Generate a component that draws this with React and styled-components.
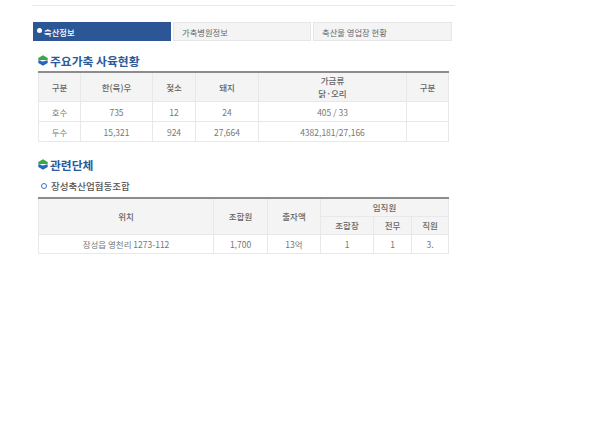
import React from "react";
import styled, { createGlobalStyle } from "styled-components";

const GlobalStyle = createGlobalStyle`
  html, body {
    margin: 0;
    padding: 0;
    background: #fff;
  }
  body {
    font-family: "Noto Sans CJK KR", "Noto Sans", sans-serif;
  }
`;

const Page = styled.div`
  width: 423px;
  margin-left: 32px;
  padding-top: 5px;
`;

const TopLine = styled.div`
  height: 1px;
  background: #e8e8e8;
`;

const Tabs = styled.ul`
  display: flex;
  gap: 2px;
  list-style: none;
  margin: 16px 0 0 1px;
  padding: 0;
`;

const Tab = styled.li`
  box-sizing: border-box;
  width: ${(props) => props.width}px;
  height: 19px;
  display: flex;
  align-items: center;
  padding-left: ${(props) => (props.active ? "3px" : "8px")};
  font-size: 8.3px;
  color: ${(props) => (props.active ? "#fff" : "#666")};
  background: ${(props) => (props.active ? "#2b5797" : "#f4f4f4")};
  border: 1px solid ${(props) => (props.active ? "#2b5797" : "#e6e6e6")};
  ${(props) => props.active && "font-weight: 500;"}
`;

const Dot = styled.span`
  width: 5px;
  height: 5px;
  border-radius: 50%;
  background: #fff;
  margin-right: 2px;
  margin-top: -3px;
`;

const Heading = styled.h2`
  display: flex;
  align-items: center;
  gap: 2px;
  margin: ${(props) => props.top}px 0 0 6px;
  height: 18px;
  font-size: 11.8px;
  font-weight: 700;
  color: #2a5a9a;
`;

const SubHeading = styled.h3`
  display: flex;
  align-items: center;
  gap: 4px;
  margin: 5px 0 0 9px;
  height: 16px;
  font-size: 9.5px;
  font-weight: 500;
  color: #555;
`;

const Ring = styled.span`
  box-sizing: border-box;
  width: 6px;
  height: 6px;
  border-radius: 50%;
  border: 1.5px solid #3f6fc0;
`;

const Table = styled.table`
  table-layout: fixed;
  border-collapse: collapse;
  width: 410px;
  margin: ${(props) => props.top}px 0 0 6px;
  border-top: 2px solid #8c8c8c;
  font-size: 8.5px;
`;

const Th = styled.th`
  height: ${(props) => props.h || 28}px;
  padding: 0;
  background: #f4f4f4;
  border: 1px solid #e8e8e8;
  border-top: 0;
  font-weight: 500;
  line-height: 13px;
  color: #666;
  text-align: center;
`;

const Td = styled.td`
  height: ${(props) => props.h || 18}px;
  padding: 0;
  border: 1px solid #e8e8e8;
  color: #777;
  text-align: center;
`;

function Emblem() {
  return (
    <svg width="10" height="11" viewBox="0 0 10 11">
      <path d="M5 0.3 9.7 3 9.7 5 0.3 5 0.3 3Z" fill="#3aa648" />
      <path d="M0.3 5.6C2.5 4.6 3.5 7 5 6.6C6.5 6.2 8 5.2 9.7 5.6L9.7 8 5 10.7 0.3 8Z" fill="#2467b8" />
    </svg>
  );
}

const mainCols = [42, 72, 43, 63, 148, 42];
const staffCols = [175, 54, 53, 53, 38, 37];

function App() {
  return (
    <Page>
      <GlobalStyle />
      <TopLine />
      <Tabs>
        <Tab active width={138}>
          <Dot />
          축산정보
        </Tab>
        <Tab width={138}>가축병원정보</Tab>
        <Tab width={139}>축산물 영업장 현황</Tab>
      </Tabs>

      <Heading top={10}>
        <Emblem />
        주요가축 사육현황
      </Heading>
      <Table top={2}>
        <colgroup>
          {mainCols.map((w, i) => (
            <col key={i} width={w} />
          ))}
        </colgroup>
        <thead>
          <tr>
            <Th>구분</Th>
            <Th>한(육)우</Th>
            <Th>젖소</Th>
            <Th>돼지</Th>
            <Th>
              가금류
              <br />
              닭·오리
            </Th>
            <Th>구분</Th>
          </tr>
        </thead>
        <tbody>
          <tr>
            <Td h={19}>호수</Td>
            <Td>735</Td>
            <Td>12</Td>
            <Td>24</Td>
            <Td>405 / 33</Td>
            <Td />
          </tr>
          <tr>
            <Td h={19}>두수</Td>
            <Td>15,321</Td>
            <Td>924</Td>
            <Td>27,664</Td>
            <Td>4382,181/27,166</Td>
            <Td />
          </tr>
        </tbody>
      </Table>

      <Heading top={13}>
        <Emblem />
        관련단체
      </Heading>
      <SubHeading>
        <Ring />
        장성축산업협동조합
      </SubHeading>
      <Table top={3}>
        <colgroup>
          {staffCols.map((w, i) => (
            <col key={i} width={w} />
          ))}
        </colgroup>
        <thead>
          <tr>
            <Th rowSpan={2}>위치</Th>
            <Th rowSpan={2}>조합원</Th>
            <Th rowSpan={2}>출자액</Th>
            <Th colSpan={3} h={17}>
              임직원
            </Th>
          </tr>
          <tr>
            <Th h={17}>조합장</Th>
            <Th h={17}>전무</Th>
            <Th h={17}>직원</Th>
          </tr>
        </thead>
        <tbody>
          <tr>
            <Td>장성읍 영천리 1273-112</Td>
            <Td>1,700</Td>
            <Td>13억</Td>
            <Td>1</Td>
            <Td>1</Td>
            <Td>3.</Td>
          </tr>
        </tbody>
      </Table>
    </Page>
  );
}

export default App;
